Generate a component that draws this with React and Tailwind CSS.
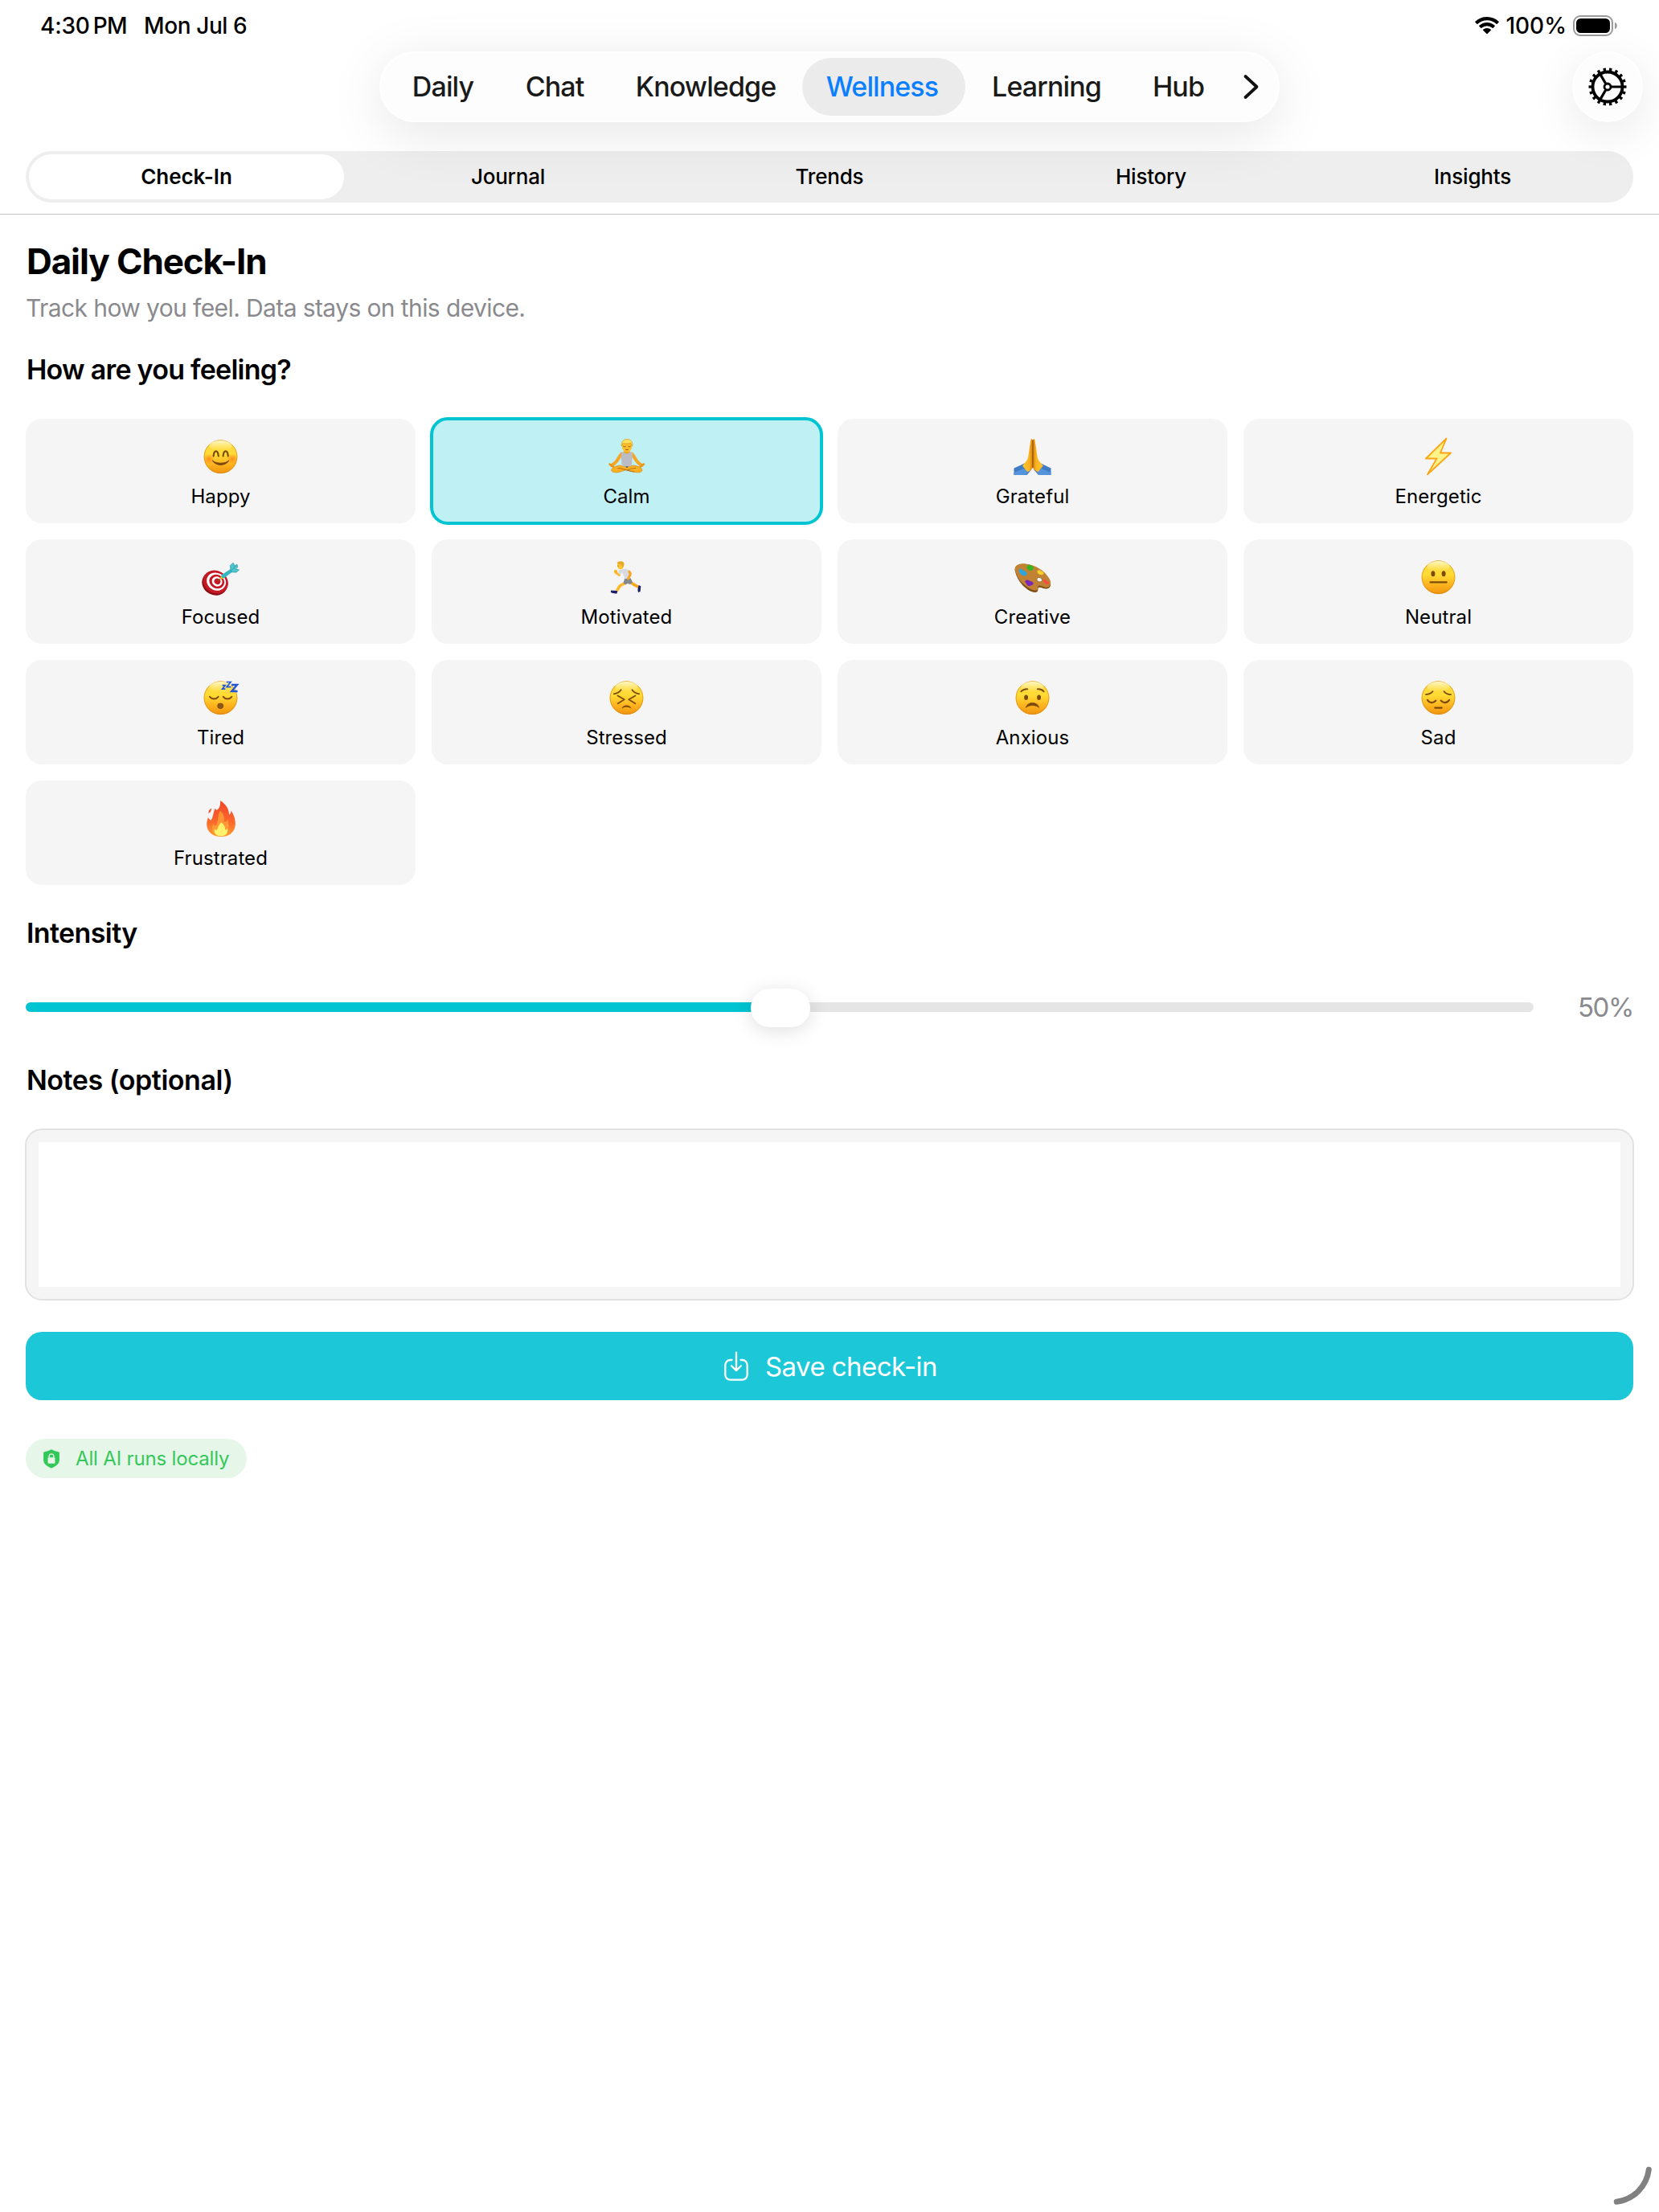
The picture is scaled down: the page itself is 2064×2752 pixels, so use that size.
import React, { useState } from 'react'
import clsx from 'clsx'

const NAV = [
  ['Daily', 'w-[142px]'],
  ['Chat', 'w-[136px]'],
  ['Knowledge', 'w-[240px]'],
  ['Wellness', 'w-[203px]'],
  ['Learning', 'w-[202px]'],
  ['Hub', 'w-[126px]'],
]

const SECTIONS = ['Check-In', 'Journal', 'Trends', 'History', 'Insights']

const BROWN = '#7c4a0b'

const line = { fill: 'none', stroke: BROWN, strokeWidth: 1.8, strokeLinecap: 'round', strokeLinejoin: 'round' }

function Face({ children }) {
  return (
    <>
      <circle cx="24.5" cy="24.2" r="20.9" fill="url(#face)" />
      <circle cx="24.5" cy="24.2" r="20.4" fill="none" stroke="#d07f10" strokeOpacity="0.6" strokeWidth="1" />
      <ellipse cx="24.5" cy="10.5" rx="14" ry="6.5" fill="url(#gloss)" />
      {children}
    </>
  )
}

const EMOJI = {
  Happy: (
    <Face>
      <circle cx="10" cy="27" r="6.5" fill="url(#blush)" />
      <circle cx="39" cy="27" r="6.5" fill="url(#blush)" />
      <path d="M15.6 23.4c.4-4.2 1.6-6 3.1-6s2.7 1.8 3.1 6M27.6 23.4c.4-4.2 1.6-6 3.1-6s2.7 1.8 3.1 6" {...line} strokeWidth="2.2" />
      <path d="M14.4 29.2c5.5 6.9 14.7 6.9 20.2 0-4.4 4-15.8 4-20.2 0z" fill={BROWN} stroke={BROWN} strokeWidth="1.1" strokeLinejoin="round" />
    </Face>
  ),
  Calm: (
    <>
      <path d="M18.5 20.5c-4 3.5-4.3 10.5-12.5 14.3" fill="none" stroke="#f5a623" strokeWidth="4" strokeLinecap="round" />
      <path d="M31 20.5c4 3.5 4.3 10.5 12.5 14.3" fill="none" stroke="#f5a623" strokeWidth="4" strokeLinecap="round" />
      <path d="M3.5 33.5l4.5 3.2M46 33.5l-4.5 3.2" stroke="#e8950f" strokeWidth="2.4" strokeLinecap="round" />
      <path d="M16.5 35c-6 .6-11 3-10.8 6 .2 2.4 4.3 3.4 9.3 2.5l10-3.2 10 3.2c5 .9 8.7-.1 8.9-2.5.2-3-5-5.4-10.900-6-5.5 2-11 2-16.5 0z" fill="#f9b024" stroke="#d98a12" strokeWidth="0.7" />
      <path d="M14 38.5c6-.5 12 4.2 20 4.5M35.5 38.5c-4-.3-7 1-10 2.5" fill="none" stroke="#b8700e" strokeWidth="1.1" strokeLinecap="round" />
      <path d="M22 34.5h6l-3 4z" fill="#42557b" />
      <path d="M18 19.5c2-1 3-1.4 3.600-2h6.6c.8.6 2 1 3.6 2 .6 5-.9 9-.6 15-3.5 2.4-9.5 2.4-12.8 0 .4-6-1.2-10-.4-15z" fill="#bcbcc4" />
      <path d="M21.500 16h6.8l.3 2.6c-1.6 2.4-5.6 2.4-7.4 0z" fill="#eda21c" />
      <ellipse cx="25" cy="11.3" rx="6.2" ry="7.2" fill="#fdc02c" />
      <path d="M18.3 11c-.6-5.5 2.5-8.6 6.9-8.6 4.3 0 7.2 3 6.5 8.6-1-1.4-1.3-2.7-2-3.8-3 1-7 1-9.4.2-.9 1-1.4 2.2-2 3.6z" fill="#ffe05a" stroke="#d39a1c" strokeWidth="0.7" />
      <path d="M20.7 11.3c.8.8 1.9.8 2.7 0M26.6 11.3c.8.8 1.9.8 2.7 0M23.5 15.2c1 .6 2 .6 3 0" {...line} strokeWidth="0.9" />
    </>
  ),
  Grateful: (
    <>
      <path d="M1.5 47V38.5L15.5 32l8 8-6 7zM47.5 47V38.5L34 32l-8 8 6 7z" fill="#3f7cc4" />
      <path d="M1.5 47v-3l12-5 5 2-1.5 6zM47.5 47v-3l-12-5-5 2 1.5 6z" fill="#5593da" />
      <path d="M22.5 2.5c1.2-.8 2.3 0 2.3 1.5L25 37c-.8 3-3.5 4.8-6.500 6.3L12 35.600c3.5-4.5 6.5-6.6 7.2-11.6z" fill="url(#handL)" />
      <path d="M27.3 2.500c-1.2-.8-2.3 0-2.3 1.5L24.8 37c.8 3 3.5 4.8 6.5 6.3l6.5-7.7c-3.5-4.5-6.5-6.6-7.2-11.6z" fill="url(#handR)" />
      <path d="M24.9 3.5V38" stroke="#8c4d07" strokeWidth="1.1" />
    </>
  ),
  Energetic: (
    <path d="M34.5 1.5 9 26.5h13.5L11 46.3 40 19.5H27z" fill="#fff38a" stroke="#fba414" strokeWidth="1.8" strokeLinejoin="round" />
  ),
  Focused: (
    <>
      <g transform="rotate(28 17.6 30.5)">
        <ellipse cx="17.8" cy="31.6" rx="16.3" ry="14.7" fill="#8d0d15" />
        <ellipse cx="18" cy="29.8" rx="16" ry="14" fill="#c51a25" />
        <ellipse cx="18.5" cy="29" rx="12.3" ry="10.8" fill="#fff" />
        <ellipse cx="19" cy="28.6" rx="9.7" ry="8.5" fill="#c51a25" />
        <ellipse cx="19.3" cy="28.4" rx="6.7" ry="5.9" fill="#fff" />
        <ellipse cx="19.6" cy="28.2" rx="4" ry="3.6" fill="#c51a25" />
      </g>
      <path d="M20.5 28.5l6-4" stroke="#7a5a1a" strokeWidth="1.2" />
      <path d="M23.5 26.8l1.8-4.7 3.7 3.2z" fill="#f3c31f" />
      <path d="M25.6 21.3 38 13.3l2.3 3.2-11.5 8.7c-2 .6-4-1.6-3.2-3.9z" fill="#36b6c0" />
      <path d="M37 15l-.6-5.5 3.8-3.2 1.8 3.8 3-2 .6 3.4-2.4 2.8 4.3.6-3.5 3.2-6-.4z" fill="#4cc6cf" stroke="#2492a0" strokeWidth="0.7" strokeLinejoin="round" />
      <path d="M38.5 15.2l4.8-5.4" stroke="#2492a0" strokeWidth="0.9" />
    </>
  ),
  Motivated: (
    <>
      <path d="M29.5 30.5c3.500 2.6 6.5 4.2 10 6" fill="none" stroke="#f5a623" strokeWidth="3.6" strokeLinecap="round" />
      <path d="M22.5 31c-1.3 2-4.5 2-6.5 4.2-1.3 1.5-2 3-3 5" fill="none" stroke="#fbb829" strokeWidth="3.6" strokeLinecap="round" strokeLinejoin="round" />
      <path d="M39.6 34l2.7 1.3-.7 6.8-2.6 1-.6-3.2z" fill="#1d1f66" />
      <path d="M5 40.6c3 .4 5.5 0 8.3.6l-.8 3.2c-2.5.5-5.5-.5-7.6-1.5z" fill="#1d1f66" />
      <path d="M15.5 21.5l-4.3-3" stroke="#fbb829" strokeWidth="2.8" strokeLinecap="round" />
      <circle cx="11" cy="17" r="2.2" fill="#fbb829" />
      <path d="M22.3 25.5h7.5l2.2 5.2-3.5 2.3-3-1.2-1.8 1.6-3.3-1.8z" fill="#85878c" />
      <path d="M14.5 15.5c3.5-1.5 7.5-2.4 10.5-1.5 2.5 1.2 3.5 3.3 3.5 5.5l-1 6.5h-5.5c-.5-3-1-5.5-3.3-7.5l-3.8 2.5z" fill="#d9dae0" />
      <path d="M27.8 17c1.6 1.6 1.8 4 .2 6l-1.5 3" fill="none" stroke="#f5a623" strokeWidth="3" strokeLinecap="round" strokeLinejoin="round" />
      <ellipse cx="17" cy="9.5" rx="4" ry="4.8" fill="#fdc62f" />
      <path d="M12.5 6.2c1.8-2.3 7-3 8.8 0 .6 2.2-.2 4.5-1.6 6.300-1-1.2-1.2-3-1.8-4.3-2 .2-4-.2-5.4-2z" fill="#e6a92b" />
      <path d="M13.7 9.5l.5 1.3" stroke={BROWN} strokeWidth="0.9" />
    </>
  ),
  Creative: (
    <>
      <path d="M3 17C1 10 8 7 16 8c12 1 24 9 29.5 19 3 6 1.8 11-3.5 11.5-3.5.3-6-2-9-1.8-2.6.6-.8 3.4-2.4 5.4-3.2 2.6-9.6-.5-14.6-4.6C9 32 4.5 24 3 17z" fill="#7e4e18" />
      <path d="M3 15.5C1.5 9.500 8 6.5 16 7.5c12 1 24 8.5 29.5 18.5 3 6 1.5 10.5-3.5 11-3.5.3-6-3-9-2.4-3 .8-.5 3.6-2.400 5.2-3.2 2.3-9.6-1-14.6-5C9 30.5 4.5 22.5 3 15.5z" fill="#c28234" />
      <ellipse cx="33.2" cy="27.2" rx="3.4" ry="2.7" fill="#f5f5f5" stroke="#8e5a1c" strokeWidth="0.7" transform="rotate(20 33.2 27.2)" />
      <path d="M8 14.5c1.5-2 3.5-.5 5 1.2 2 .8 5 1.5 4.600 4.6-1.4 3-5 2.5-7 .7-1.5-1.8-3.8-3.5-2.6-6.5z" fill="#2ea5dd" />
      <path d="M17.5 11c1-2.6 4.5-2.6 6-1.3 2 .8 3.2 2.5 2 4.6-1.5 2-4.5 2-6 .6-1.6-1-2.8-2-2-3.9z" fill="#38b422" />
      <path d="M30.5 16.5c1.5-2 4-1 5.5.3 2.3.6 3.5 2.6 1.6 4-2 .7-5 .5-6-1.3-1-.9-1.7-1.7-1.1-3z" fill="#f6cf2a" />
      <path d="M38 27.5c1.5-1.2 3.5 0 4.5 1.5 2 .7 3.4 2.5 2.4 3.8-2 .8-4.5.2-5.5-1.6-1.3-1-2.3-2.3-1.4-3.7z" fill="#f2503f" />
      <path d="M15.5 28.5c1.5-1.8 4.5-1 5.5.3 2.5.2 5.2 1.7 4.6 4-1 1.8-3.6 1.7-5 2.4-2.4-.2-3.6-1.6-3.8-3.4-1-1-2.1-2-1.3-3.3z" fill="#7a28b8" />
    </>
  ),
  Neutral: (
    <Face>
      <ellipse cx="17.9" cy="19.8" rx="2.5" ry="3.5" fill={BROWN} />
      <ellipse cx="31.1" cy="19.8" rx="2.5" ry="3.5" fill={BROWN} />
      <path d="M14.6 30.4h20" {...line} strokeWidth="2.2" />
    </Face>
  ),
  Tired: (
    <Face>
      <path d="M11 22.8c2.8 3.6 7.8 3.6 10.6 0M27.7 22.8c2.8 3.6 7.8 3.6 10.6 0" {...line} strokeWidth="1.9" />
      <ellipse cx="24.2" cy="34.3" rx="3.5" ry="3.3" fill="#8a5a1a" stroke={BROWN} strokeWidth="0.9" />
      <g fill="none" stroke="#2256d6" strokeWidth="1.7">
        <polyline points="26.500,8.7 30.1,8.7 26.5,13.2 30.3,13.2" />
        <polyline points="31.8,4.5 37,4.5 32,10.7 37.4,10.7" />
        <polyline points="38,8 45,8 38.2,16 45.6,16" strokeWidth="2.4" />
      </g>
    </Face>
  ),
  Stressed: (
    <Face>
      <path d="M8.8 19.3c3.7-.6 7-2.2 8.8-5M40.2 19.3c-3.7-.6-7-2.2-8.8-5" {...line} />
      <path d="M13.5 21.5l8.2 4.8-8 5M35.5 21.5l-8.2 4.8 8 5" {...line} strokeWidth="1.9" />
      <path d="M18.6 37.8c1.2-5.6 10.6-5.6 11.8 0-3.2-2.6-8.6-2.6-11.8 0z" fill={BROWN} />
    </Face>
  ),
  Anxious: (
    <Face>
      <path d="M10.3 16.3c2.2-2.3 4.8-3.3 8-3M38.7 16.3c-2.2-2.3-4.8-3.3-8-3" {...line} />
      <ellipse cx="16.6" cy="23.7" rx="2.4" ry="3.2" fill={BROWN} />
      <ellipse cx="32.6" cy="23.7" rx="2.4" ry="3.2" fill={BROWN} />
      <path d="M16.4 36.4c1.5-7.8 14.7-7.8 16.2 0-3.8-3.8-12.4-3.8-16.2 0z" fill={BROWN} stroke={BROWN} strokeWidth="0.8" strokeLinejoin="round" />
    </Face>
  ),
  Sad: (
    <Face>
      <path d="M8.9 20.2c3.7-.3 6.6-1.3 8.5-4M40.1 20.2c-3.7-.3-6.6-1.3-8.5-4" {...line} />
      <path d="M10.9 26.8c2.8 4.3 7.8 4.3 10.4.8M38.1 26.8c-2.8 4.3-7.8 4.3-10.4.8" {...line} strokeWidth="2.2" />
      <path d="M20.3 36.6h8.4" {...line} strokeWidth="2.2" />
    </Face>
  ),
  Frustrated: (
    <>
      <path d="M24 2c6 4 11 9.5 11 17.5 1.8-.6 2.4-2.4 2.5-5 4 6 5.5 11.5 5.3 17.5C42.3 41 35 47 25 47S7.5 41 7.2 32c-.1-3.5.8-6 1.7-9 1.3 1.7 2.2 3 3.7 3.4 2.8-4.4 2.8-9.9 5-14.6.6 1.3 1.3 2 2.5 2C23.5 11.5 24.5 6.5 24 2z" fill="url(#flame)" />
      <path d="M9.5 18c-.4-3 1-5 3.6-6.5-.2 3-.8 5-3.6 6.5z" fill="#f4502c" />
      <path d="M24 14.5c4.5 4 5.5 8.5 4.5 14 2.2.2 3.8-1.2 4.5-3 3 8 2 18-8 20.5C14 45 12 37 15.5 31c1 1.8 2 2.2 3.500 2C22 27 20.5 20 24 14.5z" fill="#ffa53a" opacity="0.75" />
      <path d="M25 29c4 3 5.5 6 5 9.5 1.5 0 2.5-1 3-2 1.5 6-2.5 9.8-8 9.8s-9.5-3-8-9c1 1.2 2 1.5 3.3 1.2C20.8 35 22.5 32.5 25 29z" fill="#fff36e" />
    </>
  ),
}

const MOODS = [
  'Happy', 'Calm', 'Grateful', 'Energetic',
  'Focused', 'Motivated', 'Creative', 'Neutral',
  'Tired', 'Stressed', 'Anxious', 'Sad',
  'Frustrated',
]

// Gradients shared by every emoji drawing
function Defs() {
  return (
    <svg width="0" height="0" className="absolute" aria-hidden="true">
      <defs>
        <linearGradient id="face" x1="0" y1="0" x2="0" y2="1">
          <stop offset="0" stopColor="#ffd84a" />
          <stop offset="0.42" stopColor="#ffdb33" />
          <stop offset="0.72" stopColor="#feb41f" />
          <stop offset="1" stopColor="#ee930f" />
        </linearGradient>
        <linearGradient id="gloss" x1="0" y1="0" x2="0" y2="1">
          <stop offset="0" stopColor="#fffdd8" stopOpacity="0.9" />
          <stop offset="1" stopColor="#fff59a" stopOpacity="0" />
        </linearGradient>
        <radialGradient id="blush">
          <stop offset="0" stopColor="#ff7a1a" stopOpacity="0.75" />
          <stop offset="1" stopColor="#ff7a1a" stopOpacity="0" />
        </radialGradient>
        <linearGradient id="handL" x1="0" y1="0" x2="1" y2="0">
          <stop offset="0" stopColor="#ffc42e" />
          <stop offset="0.65" stopColor="#fcb423" />
          <stop offset="1" stopColor="#d47f0c" />
        </linearGradient>
        <linearGradient id="handR" x1="1" y1="0" x2="0" y2="0">
          <stop offset="0" stopColor="#ffc42e" />
          <stop offset="0.65" stopColor="#fcb423" />
          <stop offset="1" stopColor="#d47f0c" />
        </linearGradient>
        <linearGradient id="flame" x1="0" y1="0" x2="0" y2="1">
          <stop offset="0" stopColor="#f2432b" />
          <stop offset="0.6" stopColor="#fb6a2c" />
          <stop offset="1" stopColor="#fda030" />
        </linearGradient>
      </defs>
    </svg>
  )
}

function Wifi() {
  return (
    <svg width="30" height="22" viewBox="0 0 30 22">
      <path d="M15 0c5.7 0 10.8 2.2 14.6 5.8.3.3.3.7 0 1l-2 2c-.3.3-.7.3-1 0A16.7 16.7 0 0 0 15 4.200c-4.5 0-8.5 1.700-11.6 4.6-.3.3-.7.3-1 0l-2-2c-.3-.3-.3-.7 0-1A21.2 21.2 0 0 1 15 0z" />
      <path d="M15 7c3.7 0 7.1 1.4 9.7 3.8.3.3.3.7 0 1l-2 2c-.3.3-.7.3-1 0a9.9 9.9 0 0 0-13.400 0c-.3.3-.7.3-1 0l-2-2c-.3-.3-.3-.7 0-1A14.2 14.2 0 0 1 15 7z" />
      <path d="M15 14c1.8 0 3.5.7 4.8 1.8.3.3.3.7 0 1l-4.3 4.3c-.3.3-.7.3-1 0l-4.3-4.3c-.3-.3-.3-.7 0-1A7.2 7.2 0 0 1 15 14z" />
    </svg>
  )
}

function Battery() {
  return (
    <svg width="56" height="26" viewBox="0 0 56 26">
      <rect x="1" y="1" width="48" height="24" rx="8" fill="none" stroke="#9a9a9a" strokeWidth="2" />
      <rect x="4" y="4" width="42" height="18" rx="5.5" />
      <path d="M52 8.8c1.8.8 2.8 2.3 2.8 4.2s-1 3.4-2.8 4.2z" fill="#9a9a9a" />
    </svg>
  )
}

function Gear() {
  return (
    <svg width="48" height="48" viewBox="0 0 48 48" fill="none" stroke="#000">
      <circle cx="24" cy="24" r="18.5" strokeWidth="3.8" />
      <circle cx="24" cy="24" r="21.6" strokeWidth="3.8" pathLength="180" strokeDasharray="4.4 5.6" strokeDashoffset="2.2" />
      <circle cx="24" cy="24" r="4" strokeWidth="2.8" />
      <path d="M29 24h14M21.5 19.7l-7-12.1M21.5 28.3l-7 12.1" strokeWidth="3.2" />
    </svg>
  )
}

function SaveIcon() {
  return (
    <svg width="30" height="38" viewBox="0 0 30 38" fill="none" stroke="#fff" strokeWidth="2.3" strokeLinecap="round" strokeLinejoin="round">
      <path d="M9.5 11h-2a6.2 6.2 0 0 0-6.2 6.2v12.3a6.2 6.2 0 0 0 6.2 6.2h15a6.2 6.2 0 0 0 6.2-6.2V17.2a6.2 6.2 0 0 0-6.2-6.200h-2" />
      <path d="M15 1.6v22.2M9 18.2l6 5.9 6-5.9" />
    </svg>
  )
}

function Shield() {
  return (
    <svg width="20" height="24" viewBox="0 0 20 24">
      <path d="M10 .3c3 1.5 6 2.5 9.2 3.1.5.1.7.4.7.9v9.2c0 5-4.7 7.7-9.9 10.3C4.8 21.2.1 18.5.1 13.5V4.3c0-.5.2-.8.7-.9C4 2.8 7 1.8 10 .3z" fill="#34c759" />
      <rect x="5.5" y="10.2" width="9" height="7.5" rx="1.2" fill="#e6f7ea" />
      <path d="M7.2 10.5V8.7a2.8 2.8 0 0 1 5.6 0v1.8" fill="none" stroke="#e6f7ea" strokeWidth="1.4" />
    </svg>
  )
}

function Heading({ className, children }) {
  return <h2 className={clsx('h-[42px] pl-px text-[34px] leading-[42px] font-semibold', className)}>{children}</h2>
}

export default function App() {
  const [mood, setMood] = useState('Calm')
  const [section, setSection] = useState('Check-In')
  const intensity = 50

  return (
    <div className="relative h-[2752px] w-[2064px] overflow-hidden bg-white font-[Inter,sans-serif] text-black">
      <Defs />

      <header className="border-b border-[#c4c4c4] pb-3.5">
        <div className="flex h-16 items-center justify-between pr-[51px] pl-[50px] text-[28px] font-medium">
          <div className="flex">
            <span className="tracking-[-0.2px]">4:30</span>
            <span className="ml-[4px] tracking-[-0.6px]">PM</span>
            <span className="ml-[21px] tracking-[-0.4px]">Mon Jul 6</span>
          </div>
          <div className="flex items-center">
            <Wifi />
            <span className="mr-[8px] ml-[8px]">100%</span>
            <Battery />
          </div>
        </div>

        <div className="relative z-10 grid h-22 grid-cols-[1fr_auto_1fr] items-center px-5">
          <div />
          <nav className="flex h-22 w-[1120px] items-center rounded-full border-2 border-white bg-[#fdfdfd] pl-[6px] text-[34px] font-medium tracking-[-0.9px] text-[#1a1a1a] shadow-[0_14px_70px_rgba(0,0,0,0.10)]">
            {NAV.map(([name, width]) => (
              <button
                key={name}
                className={clsx('h-18 rounded-full pb-px', width, name === 'Wellness' && 'bg-[#ebebeb] pr-1 text-[#0a7fff]')}
              >
                {name}
              </button>
            ))}
            <svg className="ml-[17px]" width="22" height="32" viewBox="0 0 22 32" fill="none" stroke="#111" strokeWidth="3.8" strokeLinecap="round" strokeLinejoin="round">
              <path d="M3.5 3l14 13-14 13" />
            </svg>
          </nav>
          <button className="flex size-22 items-center justify-center justify-self-end rounded-full border-2 border-white bg-[#fdfdfd] shadow-[0_14px_60px_rgba(0,0,0,0.09)]">
            <Gear />
          </button>
        </div>

        <div className="mx-8 mt-9 grid h-16 grid-cols-5 items-center rounded-full bg-[#eeeeee] text-[26px]">
          {SECTIONS.map((name) => (
            <button
              key={name}
              onClick={() => setSection(name)}
              className={clsx(
                'mx-1 h-14 rounded-full pb-0.5',
                name === section ? 'bg-white font-[560] tracking-[-0.1px]' : 'font-[450] tracking-[-0.2px]',
              )}
            >
              {name}
            </button>
          ))}
        </div>
      </header>

      <main className="px-8 pt-8">
        <h1 className="pl-px text-[44px] leading-[52px] font-bold tracking-[-1.1px]">Daily Check-In</h1>
        <p className="mt-[14px] text-[30px] leading-9 tracking-[-0.6px] text-[#8a8a8e]">Track how you feel. Data stays on this device.</p>

        <Heading className="mt-[38px] tracking-[-0.75px]">How are you feeling?</Heading>
        <div className="mt-10 grid grid-cols-4 gap-5">
          {MOODS.map((name) => (
            <button
              key={name}
              onClick={() => setMood(name)}
              className={clsx(
                'flex h-[130px] flex-col items-center rounded-[20px] pt-[23px]',
                name === mood ? 'bg-[#bff0f4] outline-4 -outline-offset-2 outline-[#00c4d1]' : 'bg-[#f5f5f5]',
              )}
            >
              <svg className="mr-px" width="48" height="48" viewBox="0 0 48 48" role="img" aria-label={name}>{EMOJI[name]}</svg>
              <span className="mt-[10px] text-2xl leading-[31px] tracking-[0.1px]">{name}</span>
            </button>
          ))}
        </div>

        <Heading className="mt-[39px] tracking-[-0.6px]">Intensity</Heading>
        <div className="mt-12 flex h-12 items-center justify-between">
          <div className="relative flex h-12 w-[1876px] items-center">
            <div className="mb-0.5 h-3 w-full overflow-hidden rounded-full bg-[#e5e5e5]">
              <div className="h-full bg-[#00c4d1]" style={{ width: `${intensity}%` }} />
            </div>
            <div
              className="absolute top-0 ml-px h-12 w-[74px] -translate-x-1/2 rounded-full bg-white shadow-[0_4px_24px_rgba(0,0,0,0.13)]"
              style={{ left: `${intensity}%` }}
            />
          </div>
          <span className="pb-[3px] text-[33px] leading-10 tracking-[-1.4px] text-[#8a8a8e]">{intensity}%</span>
        </div>

        <Heading className="mt-[45px] tracking-[-0.45px]">Notes (optional)</Heading>
        <div className="mt-10 h-[212px] rounded-[20px] bg-[#f5f5f5] p-4 outline-2 -outline-offset-1 outline-[#e2e2e2]">
          <textarea className="block h-full w-full resize-none bg-white outline-none" />
        </div>

        <button className="mt-10 flex h-[85px] w-full items-center justify-center rounded-[20px] bg-[#1cc8d8] pl-[3px] text-white">
          <SaveIcon />
          <span className="mt-[3px] ml-[21px] text-[33px] tracking-[-0.57px]">Save check-in</span>
        </button>

        <div className="mt-12 flex h-[49px] w-[275px] items-center rounded-full bg-[#e6f7ea] pl-[22px] text-2xl tracking-[-0.16px] text-[#34c759]">
          <Shield />
          <span className="ml-5 whitespace-nowrap">All AI runs locally</span>
        </div>
      </main>

      {/* Window resize handle */}
      <svg className="absolute right-0 bottom-0" width="60" height="60" viewBox="0 0 60 60" fill="none">
        <path d="M7.300 47.300A46 46 0 0 0 47.300 7.300" stroke="#808080" strokeWidth="7" strokeLinecap="round" />
      </svg>
    </div>
  )
}
